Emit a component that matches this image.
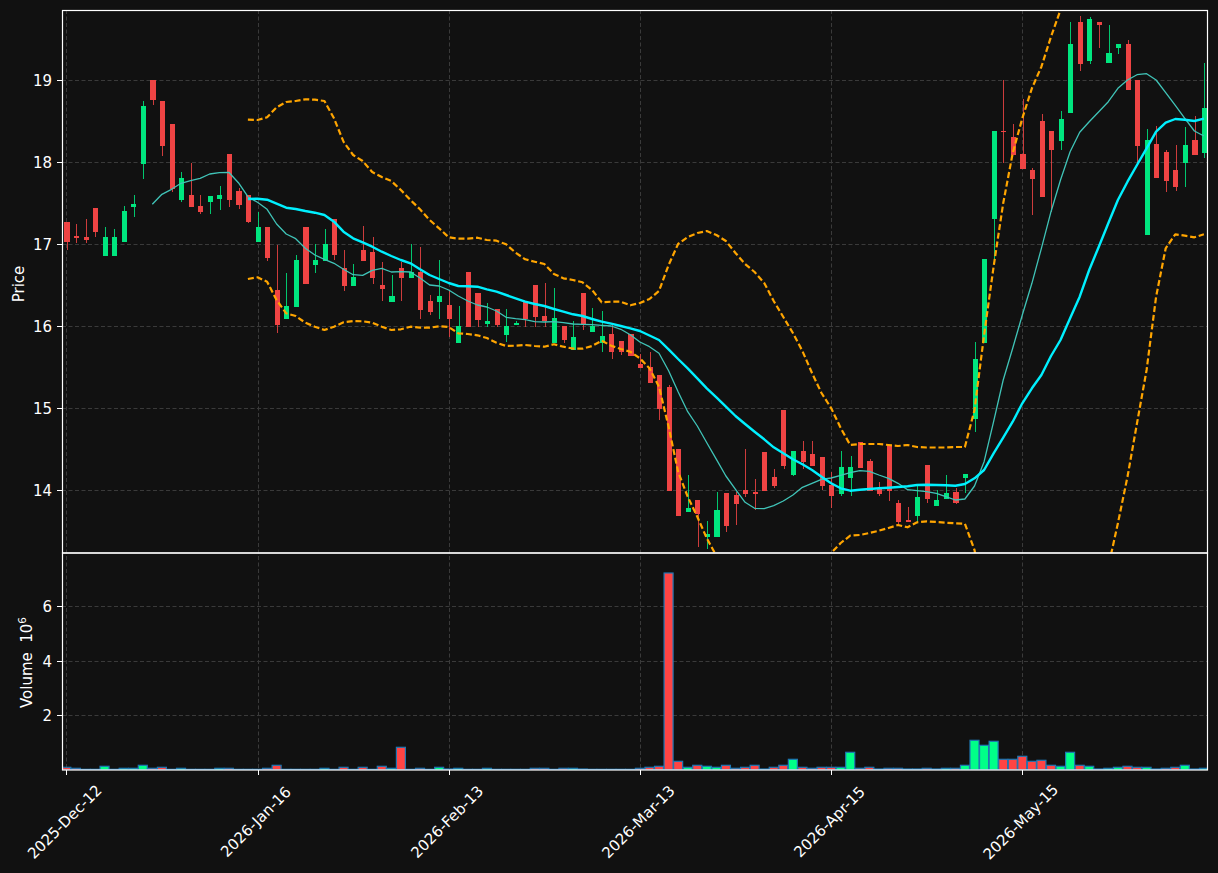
import React from "react";

// candle pixel data: [wickTop, bodyTop, bodyBottom, wickBottom, "r" | "g"]
type Candle = [number, number, number, number, "r" | "g"];

const candles: Candle[] = [
  [222, 222, 241.7, 250, "r"],
  [224.3, 236, 238, 242.7, "r"],
  [219.3, 237, 240, 242.7, "r"],
  [208, 208, 232, 236.7, "r"],
  [227.3, 237, 256, 256, "g"],
  [229.3, 237, 256, 256, "g"],
  [206, 211, 242, 242, "g"],
  [195.3, 204, 207, 216.7, "g"],
  [101.3, 106, 163.7, 178.7, "g"],
  [80, 80, 100, 104.7, "r"],
  [101, 101, 146, 155.7, "r"],
  [124, 124, 189, 191.7, "r"],
  [172.3, 178, 200, 201.7, "g"],
  [162.7, 195, 207, 207, "r"],
  [195.3, 206, 212, 213.7, "r"],
  [196, 196, 202, 213.7, "g"],
  [186.3, 195, 199, 209.7, "g"],
  [154, 154, 200, 206.7, "r"],
  [188.3, 191, 205, 208.7, "r"],
  [195, 195, 222, 222.7, "r"],
  [211.7, 227, 242, 242, "g"],
  [227, 227, 258, 260.7, "r"],
  [245.3, 290, 325, 332.7, "r"],
  [273.3, 306, 319, 319, "g"],
  [255.3, 260, 307, 307, "g"],
  [227, 227, 284, 284, "r"],
  [244.3, 260, 265, 272.7, "g"],
  [229.3, 244, 261, 261, "g"],
  [219, 219, 255, 259.7, "r"],
  [250.3, 268, 286, 290.7, "r"],
  [264.3, 277, 286, 286, "g"],
  [226, 250, 261, 261, "r"],
  [237, 252, 278, 283.7, "r"],
  [262, 285, 289, 300.7, "r"],
  [275.3, 296, 302, 302, "g"],
  [262, 268, 278, 300.7, "r"],
  [244.3, 272, 278, 278, "g"],
  [247, 272, 310, 318.7, "r"],
  [295, 301, 312, 314.7, "r"],
  [260, 296, 302, 318.7, "g"],
  [290, 305, 319, 337, "r"],
  [306.3, 326, 343, 343, "g"],
  [272, 272, 327, 327, "r"],
  [293, 293, 320, 327, "r"],
  [303, 321, 324, 327, "g"],
  [309, 309, 325, 327, "r"],
  [309, 326, 335, 341.7, "g"],
  [321, 323, 325, 325, "g"],
  [302, 302, 319, 327, "r"],
  [285, 285, 317, 327, "r"],
  [283.3, 316, 321, 327, "r"],
  [288.3, 318, 343, 343, "g"],
  [326, 326, 340, 342.7, "r"],
  [321, 337, 350, 350, "g"],
  [293, 293, 325, 329.7, "r"],
  [308.3, 326, 332, 332, "g"],
  [311.3, 336, 343, 352, "g"],
  [325, 334, 352, 359.3, "r"],
  [341, 341, 352, 355.3, "r"],
  [334, 334, 356, 356, "r"],
  [354, 364, 368, 368, "r"],
  [352, 367, 383, 383, "r"],
  [375, 375, 409, 420, "r"],
  [385, 387, 491, 491, "r"],
  [449, 449, 516, 516, "r"],
  [475, 508, 512, 512, "g"],
  [500, 500, 514, 546.7, "r"],
  [521.3, 534, 537, 549, "g"],
  [492, 510, 537, 537, "g"],
  [493, 493, 526, 531.7, "r"],
  [492, 495, 504, 525.3, "r"],
  [449, 490, 494, 497, "r"],
  [479, 492, 494, 510, "r"],
  [452, 452, 491, 491, "r"],
  [469.3, 477, 486, 488.3, "r"],
  [410, 410, 466, 469.3, "r"],
  [451, 451, 475, 476, "g"],
  [441.3, 451, 462, 469.3, "r"],
  [441.3, 454, 466, 466, "r"],
  [457, 457, 486, 490.3, "r"],
  [472.3, 485, 496, 507.7, "r"],
  [451.3, 467, 494, 495.7, "g"],
  [456.3, 467, 478, 495.7, "g"],
  [442, 442, 468, 468, "r"],
  [459, 461, 491, 491, "r"],
  [482.3, 489, 494, 495.7, "r"],
  [445, 445, 491, 500.7, "r"],
  [500, 503, 522, 524, "r"],
  [507, 520, 522, 522, "r"],
  [485, 497, 516, 522.7, "g"],
  [465, 465, 499, 503.3, "r"],
  [490.3, 500, 506, 506, "g"],
  [475.3, 493, 499, 499, "g"],
  [488.3, 492, 503, 503.5, "r"],
  [474, 474, 478, 493.3, "g"],
  [342, 359, 419, 432, "g"],
  [259, 259, 343, 343, "g"],
  [131, 131, 219, 263, "g"],
  [80, 131, 132, 162.7, "r"],
  [124.3, 137, 155, 155, "r"],
  [99, 154, 169, 169, "r"],
  [168, 170, 179, 214.7, "r"],
  [114.3, 121, 197, 197, "r"],
  [131, 131, 150, 212, "r"],
  [111.3, 119, 141, 149.7, "g"],
  [22, 44, 113, 113, "g"],
  [16, 22, 64, 70.7, "r"],
  [17.3, 19, 61, 63.7, "g"],
  [22, 22, 25, 47.7, "r"],
  [25.3, 53, 63, 63, "g"],
  [44, 44, 48, 53.7, "g"],
  [40.3, 44, 90, 90, "r"],
  [80, 80, 146, 163, "r"],
  [129.3, 140, 235, 235, "g"],
  [126.3, 144, 178, 178, "r"],
  [150, 152, 181, 191.7, "r"],
  [145, 170, 187, 190.7, "r"],
  [127.3, 145, 163, 186.7, "g"],
  [116.3, 140, 155, 155, "r"],
  [63.3, 108, 153, 158.3, "g"],
];

const volumeTops = [
  767.3, 768.3, 769.3, 769.3, 766.3, 769.3, 768.3, 768.3, 765.3, 768.3,
  767.3, 769.3, 768.3, 769.3, 769.3, 769.3, 768.3, 768.3, 769.3, 769.3,
  769.3, 768.3, 765.3, 769.3, 769.3, 769.3, 769.3, 768.3, 769.3, 767.3,
  769.3, 767.3, 769.3, 766.3, 768.3, 747.3, 769.3, 768.3, 769.3, 767.3,
  769, 768.3, 769.3, 769.3, 768.3, 769.3, 769.3, 769.3, 769.3, 768.3,
  768.3, 769.3, 768.3, 768.3, 769, 769.3, 769.3, 769.3, 769.3, 769.3,
  768.3, 767.3, 766.3, 573, 761.3, 767.3, 765.3, 766.3, 767.3, 765.3,
  768.3, 767.3, 765.3, 769, 767.3, 765.3, 759.3, 767.3, 768.3, 767.3,
  767.3, 767.3, 752.3, 768.3, 767.3, 769, 768.3, 768.3, 769, 769,
  768.3, 769, 768.3, 768.3, 765.3, 740.3, 745.3, 741.3, 759.3, 759.3,
  756.3, 761.3, 760.3, 765.3, 766.3, 752.3, 765.3, 766.3, 769, 768.3,
  767.3, 766.3, 767.3, 767.3, 769, 768.3, 767.3, 765.3, 769, 768.3,
];

const thinMa = [
  204.3, 194.3, 189.3, 183.3, 180.7, 178.3, 174, 172.7, 172.3, 182.7,
  196.7, 202.3, 209.3, 224, 234, 238.7, 248.3, 255, 259.3, 263.3,
  269.3, 274.7, 275.3, 270.3, 268.3, 272, 271.7, 272, 278, 285,
  286, 290, 296, 301, 305, 307, 311, 317.3, 318.7, 319.7,
  321.7, 322, 321.7, 322.7, 324, 324.3, 324.7, 325.3, 326, 329.3,
  334.7, 342, 346.7, 353.3, 370.7, 391.7, 411.7, 426, 442.7, 459.3,
  476, 489.3, 502.3, 508.3, 508.7, 505.7, 501, 495, 487.3, 483.3,
  479.3, 478, 475.3, 472.7, 470.7, 471.3, 475, 478.3, 483.3, 489.7,
  490.7, 491.7, 493.3, 496.7, 500, 499, 486, 461.7, 421.7, 380,
  348.3, 315, 283.3, 248.3, 211.7, 180, 151.7, 132.3, 121.7, 111.7,
  101.7, 88.3, 80, 74.7, 73.7, 80, 92.7, 105.3, 118.3, 131, 136,
];

const thickMa = [
  199, 198.7, 199.7, 203.7, 207.7, 209, 211, 212.7, 215, 221.7,
  231.7, 238.3, 242.3, 246.7, 251.7, 256, 260, 263.3, 269.3, 275,
  279, 283, 286, 286.3, 286.7, 289.3, 291.7, 295, 298.3, 301.7,
  304, 306, 309, 311.7, 314.3, 316, 319, 321.7, 323.7, 326,
  328.3, 331, 335.5, 340, 349.3, 359, 368.3, 378.3, 388.3, 397.3,
  406.7, 416, 424, 431.7, 439.3, 447.3, 453.3, 459.3, 464.3, 470,
  476.7, 483.3, 488.3, 490.7, 489.7, 489, 488.3, 487.7, 487, 486.3,
  485, 484.7, 485, 485.3, 485.7, 484, 478.3, 470, 453.3, 437.7,
  421.7, 403.3, 388.3, 375, 356, 340, 318.3, 296.7, 270, 246.7,
  223.3, 200, 181.7, 165, 148.3, 131.7, 122.7, 119, 119.7, 121, 118.7,
];

const upperBand = [
  119.7, 120, 117.3, 107.3, 102, 101, 99.3, 99.7, 101, 118.3,
  141.7, 155, 161, 172, 177, 181, 190, 200, 209.3, 220,
  228.3, 237.3, 238.7, 238.7, 237.7, 240, 240.7, 244.3, 252.7, 259.3,
  261.7, 264, 274, 278.3, 280, 282.3, 290, 302.3, 301.7, 301.7,
  305.3, 303, 299, 291, 265, 244, 237, 233, 231, 235,
  241, 253, 264, 272, 283, 301, 317, 333, 351, 373,
  393, 408, 428, 445, 444, 444, 444, 445, 446, 445,
  447, 447.5, 447.5, 447.5, 447, 447, 410, 335, 266.7, 203.3,
  153.3, 118.3, 88.3, 66.7, 36.7, 10, -20,
];

const lowerBand = [
  279, 277.3, 281.7, 300, 313.3, 316, 322.7, 326.7, 330, 326.7,
  322.3, 321, 321.3, 322.7, 326.7, 330, 329.3, 326.7, 327.7, 327.7,
  326.3, 327, 333.3, 334, 335.3, 338, 342.7, 346, 345.7, 345,
  346, 346.7, 344.3, 346.7, 348.7, 348.7, 346, 340.7, 345.7, 349,
  351.7, 358.3, 368.3, 386.7, 426.7, 471.7, 496.7, 516.7, 538.3, 556,
  600, 620, 620, 620, 620, 620, 620, 620, 620, 600,
  575, 553, 543, 535.7, 535, 533, 530.7, 528, 525, 527.3,
  522.3, 521.3, 522, 522.7, 523.3, 523.7, 550, 600, 620, 620,
  620, 620, 620, 620, 620, 620, 620, 620, 620, 620,
  566.7, 523.3, 476.7, 423.3, 370, 296.7, 248.3, 234.3, 235.7, 237.3, 234.3,
];

const RED = "#ef4444";
const GREEN = "#00e67f";

const xOf = (i: number) => 66.3 + 9.56 * i;
const pts = (ys: number[], start: number) =>
  ys.map((y, i) => `${xOf(start + i).toFixed(1)},${y}`).join(" ");

const dateTicks = [
  { i: 0, label: "2025-Dec-12" },
  { i: 20, label: "2026-Jan-16" },
  { i: 40, label: "2026-Feb-13" },
  { i: 60, label: "2026-Mar-13" },
  { i: 80, label: "2026-Apr-15" },
  { i: 100, label: "2026-May-15" },
];
const priceTicks = [
  { y: 80.5, label: "19" },
  { y: 162.5, label: "18" },
  { y: 244.5, label: "17" },
  { y: 326.5, label: "16" },
  { y: 408.5, label: "15" },
  { y: 490.5, label: "14" },
];
const volumeTicks = [
  { y: 606.5, label: "6" },
  { y: 661.5, label: "4" },
  { y: 715.5, label: "2" },
];

export default function App() {
  return (
    <div className="h-[873px] w-[1218px] overflow-hidden bg-[#111111] font-['DejaVu_Sans',sans-serif] text-white">
      <svg width={1218} height={873} viewBox="0 0 1218 873" className="block">
        <defs>
          <clipPath id="price-clip">
            <rect x={62} y={10} width={1146} height={543} />
          </clipPath>
          <clipPath id="volume-clip">
            <rect x={62} y={553} width={1146} height={217} />
          </clipPath>
        </defs>

        {/* grid */}
        <g stroke="#3a3a3a" strokeWidth={1} strokeDasharray="4 2.5">
          {priceTicks.concat(volumeTicks).map((t) => (
            <line key={t.y} x1={62} x2={1208} y1={t.y} y2={t.y} />
          ))}
          {dateTicks.map((t) => (
            <line
              key={t.i}
              x1={Math.round(xOf(t.i)) + 0.5}
              x2={Math.round(xOf(t.i)) + 0.5}
              y1={10}
              y2={770}
            />
          ))}
        </g>

        {/* candles */}
        <g clipPath="url(#price-clip)" shapeRendering="crispEdges">
          {candles.map(([wt, bt, bb, wb, c], i) => {
            const x = xOf(i) + 0.3;
            const left = Math.round(x - 2.2);
            const right = Math.round(x + 2.9);
            const fill = c === "g" ? GREEN : RED;
            return (
              <g key={i}>
                <rect x={Math.round(x)} y={wt} width={1} height={wb - wt} fill={fill} opacity={0.85} />
                <rect x={left} y={bt} width={right - left} height={Math.max(bb - bt, 1)} fill={fill} />
              </g>
            );
          })}
        </g>

        {/* moving averages + bands */}
        <g clipPath="url(#price-clip)" fill="none" strokeLinejoin="round">
          <polyline points={pts(thinMa, 9)} stroke="#40c4b8" strokeWidth={1.3} />
          <polyline points={pts(thickMa, 19)} stroke="#00f0ff" strokeWidth={2.4} />
          <polyline points={pts(upperBand, 19)} stroke="#ffa500" strokeWidth={2.2} strokeDasharray="6 2.8" />
          <polyline points={pts(lowerBand, 19)} stroke="#ffa500" strokeWidth={2.2} strokeDasharray="6 2.8" />
        </g>

        {/* volume */}
        <g clipPath="url(#volume-clip)" stroke="#1f77b4" strokeWidth={1.2}>
          {volumeTops.map((top, i) => (
            <rect
              key={i}
              x={xOf(i) - 4.5}
              y={top}
              width={9}
              height={770 - top}
              fill={candles[i][4] === "g" ? "#00ff88" : "#ff4444"}
            />
          ))}
        </g>

        {/* spines */}
        <g fill="none" stroke="#ffffff" strokeWidth={1.2}>
          <rect x={62.5} y={10.5} width={1145} height={542.5} />
          <rect x={62.5} y={553} width={1145} height={217} />
        </g>

        {/* ticks */}
        <g stroke="#ffffff" strokeWidth={1}>
          {priceTicks.concat(volumeTicks).map((t) => (
            <line key={t.y} x1={57} x2={62} y1={t.y} y2={t.y} />
          ))}
          {dateTicks.map((t) => (
            <line
              key={t.i}
              x1={Math.round(xOf(t.i)) + 0.5}
              x2={Math.round(xOf(t.i)) + 0.5}
              y1={770}
              y2={775}
            />
          ))}
        </g>

        {/* labels */}
        <g fill="#ffffff" className="text-[15px]">
          {priceTicks.concat(volumeTicks).map((t) => (
            <text key={t.y} x={52} y={t.y + 5.5} textAnchor="end">
              {t.label}
            </text>
          ))}
          {dateTicks.map((t) => (
            <text
              key={t.i}
              textAnchor="middle"
              dominantBaseline="central"
              transform={`translate(${xOf(t.i) - 1.5} 822) rotate(-45)`}
            >
              {t.label}
            </text>
          ))}
          <text textAnchor="middle" transform="translate(24 284) rotate(-90)">
            Price
          </text>
          <text textAnchor="middle" transform="translate(32 662.5) rotate(-90)">
            {"Volume\u00a0\u00a010"}
            <tspan dy={-6} className="text-[10.5px]">
              6
            </tspan>
          </text>
        </g>
      </svg>
    </div>
  );
}
